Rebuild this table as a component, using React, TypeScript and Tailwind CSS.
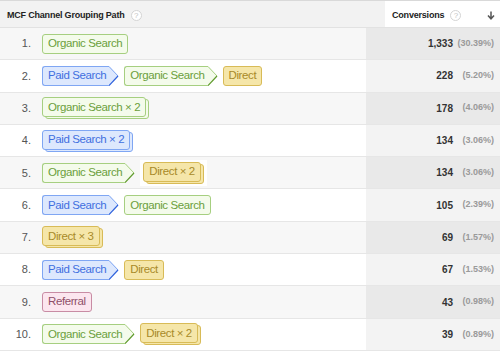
import type { ReactNode } from "react";

type Channel = "organic" | "paid" | "direct" | "referral";

const palette: Record<Channel, { box: string; fill: string; line: string; edge: string }> = {
  organic: {
    box: "bg-[#f4fbeb] border-[#a6cf80] text-[#6b9f3c]",
    fill: "#f4fbeb",
    line: "#a6cf80",
    edge: "#5f9a2c",
  },
  paid: {
    box: "bg-[#dde8fd] border-[#7fa6f3] text-[#3f6fe0]",
    fill: "#dde8fd",
    line: "#7fa6f3",
    edge: "#2f62dc",
  },
  direct: {
    box: "bg-[#f5e6a9] border-[#d8bb57] text-[#a88a28]",
    fill: "#f5e6a9",
    line: "#d8bb57",
    edge: "#c29f2f",
  },
  referral: {
    box: "bg-[#fce6ef] border-[#c88ca4] text-[#8f4f69]",
    fill: "#fce6ef",
    line: "#c88ca4",
    edge: "#b0718a",
  },
};

type Step = { channel: Channel; label: string; count?: number };

type Row = { steps: Step[]; conversions: string; share: string; whiteStack?: boolean };

const rows: Row[] = [
  { steps: [{ channel: "organic", label: "Organic Search" }], conversions: "1,333", share: "(30.39%)" },
  {
    steps: [
      { channel: "paid", label: "Paid Search" },
      { channel: "organic", label: "Organic Search" },
      { channel: "direct", label: "Direct" },
    ],
    conversions: "228",
    share: "(5.20%)",
  },
  { steps: [{ channel: "organic", label: "Organic Search", count: 2 }], conversions: "178", share: "(4.06%)" },
  { steps: [{ channel: "paid", label: "Paid Search", count: 2 }], conversions: "134", share: "(3.06%)" },
  {
    steps: [
      { channel: "organic", label: "Organic Search" },
      { channel: "direct", label: "Direct", count: 2 },
    ],
    conversions: "134",
    share: "(3.06%)",
    whiteStack: true,
  },
  {
    steps: [
      { channel: "paid", label: "Paid Search" },
      { channel: "organic", label: "Organic Search" },
    ],
    conversions: "105",
    share: "(2.39%)",
  },
  { steps: [{ channel: "direct", label: "Direct", count: 3 }], conversions: "69", share: "(1.57%)" },
  {
    steps: [
      { channel: "paid", label: "Paid Search" },
      { channel: "direct", label: "Direct" },
    ],
    conversions: "67",
    share: "(1.53%)",
  },
  { steps: [{ channel: "referral", label: "Referral" }], conversions: "43", share: "(0.98%)" },
  {
    steps: [
      { channel: "organic", label: "Organic Search" },
      { channel: "direct", label: "Direct", count: 2 },
    ],
    conversions: "39",
    share: "(0.89%)",
  },
];

function HelpIcon() {
  return (
    <span className="inline-flex h-[11px] w-[11px] items-center justify-center rounded-full border border-[#d4d4d4] bg-white text-[8px] font-normal leading-none text-[#c4c4c4]">
      ?
    </span>
  );
}

function Label({ step }: { step: Step }) {
  return (
    <>
      {step.label}
      {step.count ? ` × ${step.count}` : ""}
    </>
  );
}

// a touchpoint with a pointed right end, followed by another one
function ArrowPill({ step }: { step: Step }) {
  const c = palette[step.channel];
  return (
    <div className="flex h-[20px] items-stretch">
      <div className={`flex items-center rounded-l-[3px] border border-r-0 pl-[5px] pr-[3px] ${c.box}`}>
        <Label step={step} />
      </div>
      <svg width="10" height="20" viewBox="0 0 10 20" className="block">
        <polygon points="0,0 9.5,10 0,20" fill={c.fill} />
        <path d="M0 0.5 L9 10" stroke={c.line} strokeWidth="1" fill="none" />
        <path d="M9 10 L0 19.5" stroke={c.edge} strokeWidth="1.2" fill="none" />
      </svg>
    </div>
  );
}

function Pill({ step }: { step: Step }) {
  const c = palette[step.channel];
  const body = (
    <div className={`relative flex h-[20px] items-center rounded-[3px] border px-[5px] ${c.box}`}>
      <Label step={step} />
    </div>
  );
  if (!step.count) return body;
  return (
    <div className="relative pb-[2px] pr-[3px]">
      <div className={`absolute bottom-0 left-[3px] right-0 top-[2px] rounded-[3px] border ${c.box}`} />
      {body}
    </div>
  );
}

function Path({ row }: { row: Row }) {
  return (
    <div className="flex items-center gap-[5px]">
      {row.steps.map((step, i) => {
        const last = i === row.steps.length - 1;
        if (!last) return <ArrowPill key={i} step={step} />;
        if (row.whiteStack && step.count) {
          return (
            <div key={i} className="-my-[2px] bg-white px-[3px] py-[2px]">
              <Pill step={step} />
            </div>
          );
        }
        return <Pill key={i} step={step} />;
      })}
    </div>
  );
}

function Cell({ children, className }: { children: ReactNode; className: string }) {
  return <div className={className}>{children}</div>;
}

export default function App() {
  return (
    <div className="h-[352px] w-[500px] overflow-hidden bg-white font-['Liberation_Sans',Arial,sans-serif]">
      <div className="flex h-[28px] border-t border-b border-t-[#d9d9d9] border-b-[#e2e2e2]">
        <div className="flex w-[385px] items-center gap-[6px] bg-[#f2f2f2] pl-[7px] pt-[3px] text-[9px] font-bold tracking-[-0.2px] text-[#222]">
          MCF Channel Grouping Path
          <HelpIcon />
        </div>
        <div className="flex flex-1 items-center pt-[3px] text-[9px] font-bold tracking-[-0.2px] text-[#222]">
          <span className="ml-[7px]">Conversions</span>
          <span className="ml-[6px]">
            <HelpIcon />
          </span>
          <svg width="8" height="9" viewBox="0 0 8 9" className="ml-auto mr-[5px]">
            <path d="M4 0.5 V7.5 M1 4.5 L4 7.8 L7 4.5" stroke="#555" strokeWidth="1.5" fill="none" />
          </svg>
        </div>
      </div>
      {rows.map((row, i) => {
        const odd = i % 2 === 0;
        return (
          <div key={i} className="flex h-[32.3px] border-b border-[#e6e6e6]">
            <div className={`flex w-[366px] items-center ${odd ? "bg-[#f7f7f7]" : "bg-white"}`}>
              <Cell className="w-[32px] pr-[1px] text-right text-[11px] text-[#555]">{i + 1}.</Cell>
              <div className="ml-[10px] text-[11.5px] tracking-[-0.4px]">
                <Path row={row} />
              </div>
            </div>
            <div className={`flex flex-1 items-center justify-end pr-[6px] ${odd ? "bg-[#e9e9e9]" : "bg-[#f3f3f3]"}`}>
              <span className="text-[10px] font-bold text-[#333]">{row.conversions}</span>
              <span className="w-[41px] text-right text-[9px] font-bold text-[#9a9a9a]">{row.share}</span>
            </div>
          </div>
        );
      })}
    </div>
  );
}
